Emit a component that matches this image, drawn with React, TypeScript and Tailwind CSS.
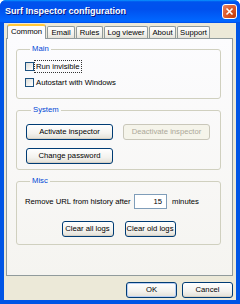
import React from 'react';

const font = "font-['Liberation_Sans',Arial,sans-serif]";

function XpButton({
  children,
  width,
  disabled,
  isDefault,
}: {
  children: React.ReactNode;
  width: string;
  disabled?: boolean;
  isDefault?: boolean;
}) {
  if (disabled) {
    return (
      <button
        type="button"
        disabled
        className={`${width} flex h-[16px] items-center justify-center whitespace-nowrap rounded-[3px] border border-[#C9C7BA] bg-[#F5F4EA] text-[7.7px] leading-none text-[#ACA899]`}
      >
        {children}
      </button>
    );
  }
  return (
    <button
      type="button"
      className={`${width} flex h-[16px] items-center justify-center whitespace-nowrap rounded-[3px] border border-[#003C74] bg-[linear-gradient(180deg,#ffffff,#f3f2ee_60%,#e3e0d6)] text-[7.7px] leading-none text-black ${
        isDefault ? 'shadow-[inset_0_0_0_1px_#B9CEF4]' : 'shadow-[inset_0_-1px_0_#d6d0c5]'
      }`}
    >
      {children}
    </button>
  );
}

function Checkbox({ label, focused }: { label: string; focused?: boolean }) {
  return (
    <div className="flex h-[13px] items-center">
      <span className="h-[9px] w-[9px] shrink-0 border border-[#1C5180] bg-[linear-gradient(135deg,#dcdcd7,#ffffff)]" />
      <span
        className={`ml-[1px] px-[1px] leading-[11px] ${
          focused ? 'outline-1 outline-dotted outline-[#333]' : ''
        }`}
      >
        {label}
      </span>
    </div>
  );
}

function Group({
  title,
  className,
  children,
}: {
  title: string;
  className?: string;
  children: React.ReactNode;
}) {
  return (
    <fieldset className={`rounded-[3px] border border-[#D0D0BF] ${className ?? ''}`}>
      <legend className="ml-[5px] px-[2px] text-[7.7px] leading-[10px] text-[#0046D5]">
        {title}
      </legend>
      {children}
    </fieldset>
  );
}

const tabs = [
  { label: 'Email', w: 'w-[28px]' },
  { label: 'Rules', w: 'w-[27px]' },
  { label: 'Log viewer', w: 'w-[44px]' },
  { label: 'About', w: 'w-[27px]' },
  { label: 'Support', w: 'w-[33px]' },
];

export default function App() {
  return (
    <div
      className={`${font} flex h-[304px] w-[240px] flex-col overflow-hidden rounded-t-[6px] bg-[#0055E5] text-[7.7px] text-black`}
    >
      {/* Title bar */}
      <div className="flex h-[23px] shrink-0 items-center justify-between bg-[linear-gradient(180deg,#0997ff,#0053ee_8%,#0050ee_40%,#0066ff_88%,#0066ff_93%,#005bff_95%,#0053ee_96%,#0053ee)] pl-[5px] pr-[3px]">
        <span className="text-[9px] font-bold text-white [text-shadow:1px_1px_0_#0a1883]">
          Surf Inspector configuration
        </span>
        <button
          type="button"
          className="flex h-[15px] w-[15px] items-center justify-center rounded-[3px] border border-white bg-[radial-gradient(circle_at_90%_90%,#c43c0a_0%,#dc5a2a_55%,#e8866a_100%)]"
        >
          <svg width="9" height="9" viewBox="0 0 9 9">
            <path d="M1.5 1.5L7.5 7.5M7.5 1.5L1.5 7.5" stroke="#fff" strokeWidth="1.6" />
          </svg>
        </button>
      </div>

      {/* Body */}
      <div className="mx-[4px] mb-[4px] flex flex-1 flex-col bg-[#ECE9D8] pl-[2px] pr-[3px] pt-[2px]">
        {/* Tabs */}
        <div className="flex h-[13px] items-end pl-[1px]">
          <div className="relative z-10 -mb-[1px] flex h-[15px] w-[39px] items-center justify-center rounded-t-[3px] border-x border-t-[2px] border-x-[#919B9C] border-t-[#FFC83C] bg-[#FCFCFE] pb-[1px]">
            Common
          </div>
          {tabs.map((t) => (
            <div
              key={t.label}
              className={`${t.w} ml-[1px] flex h-[12px] items-center justify-center whitespace-nowrap rounded-t-[2px] border-x border-t border-[#919B9C] bg-[linear-gradient(180deg,#ffffff,#f1f0ea_70%,#e4e2d8)]`}
            >
              {t.label}
            </div>
          ))}
        </div>

        {/* Tab panel */}
        <div className="flex h-[238px] flex-col border border-[#919B9C] bg-[linear-gradient(180deg,#fcfcfe,#f5f4f0)] pl-[9px] pt-[5px]">
          <div className="w-[205px]">
            <Group title="Main" className="pb-[9px] pl-[8px]">
              <div className="mt-[6px] flex flex-col gap-[3px]">
                <Checkbox label="Run invisible" focused />
                <Checkbox label="Autostart with Windows" />
              </div>
            </Group>

            <Group title="System" className="mt-[6px] pb-[5px] pl-[9px]">
              <div className="mt-[9px] flex gap-[10px]">
                <XpButton width="w-[87px]">Activate inspector</XpButton>
                <XpButton width="w-[87px]" disabled>
                  Deactivate inspector
                </XpButton>
              </div>
              <div className="mt-[8px]">
                <XpButton width="w-[87px]">Change password</XpButton>
              </div>
            </Group>

            <Group title="Misc" className="mt-[6px] pb-[7px] pl-[8px]">
              <div className="mt-[8px] flex h-[15px] items-center">
                <span className="w-[109px] whitespace-nowrap">Remove URL from history after</span>
                <div className="flex h-[15px] w-[33px] items-center justify-end border border-[#7F9DB9] bg-white pr-[4px]">
                  15
                </div>
                <span className="ml-[5px]">minutes</span>
              </div>
              <div className="mt-[12px] flex justify-center gap-[11px] pr-[8px]">
                <XpButton width="w-[52px]">Clear all logs</XpButton>
                <XpButton width="w-[51px]">Clear old logs</XpButton>
              </div>
            </Group>
          </div>
        </div>

        {/* Footer buttons */}
        <div className="mt-[6px] flex justify-end gap-[5px]">
          <XpButton width="w-[51px]" isDefault>
            OK
          </XpButton>
          <XpButton width="w-[51px]">Cancel</XpButton>
        </div>
      </div>
    </div>
  );
}
